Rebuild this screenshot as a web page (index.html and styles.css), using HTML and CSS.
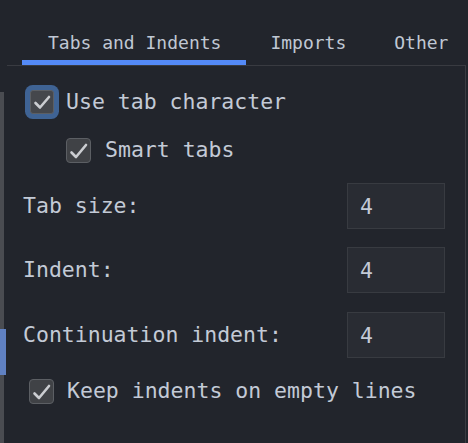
FILE: index.html
```html
<!DOCTYPE html>
<html>
<head>
<meta charset="utf-8">
<link rel="stylesheet" href="styles.css">
</head>
<body>
<div class="app">
  <div class="sidebar">
    <div class="bar"><div class="bar-active"></div></div>
  </div>
  <div class="main">
    <div class="header">
      <div class="tabs">
        <div class="tab tab-active">Tabs and Indents</div>
        <div class="tab">Imports</div>
        <div class="tab">Other</div>
      </div>
    </div>
    <div class="content">
      <label class="check-row row-first">
        <span class="box box-focus"><svg viewBox="0 0 24 24" width="24" height="24"><path d="M5.5 13 L10 17.5 L19 7" /></svg></span>
        <span class="check-label gap-12">Use tab character</span>
      </label>
      <label class="check-row row-smart">
        <span class="box"><svg viewBox="0 0 25 25" width="25" height="25"><path d="M5.5 14.5 L10 19 L20 7" /></svg></span>
        <span class="check-label gap-14">Smart tabs</span>
      </label>
      <div class="field row-field1">
        <span class="field-label">Tab size:</span>
        <span class="input">4</span>
      </div>
      <div class="field row-field">
        <span class="field-label">Indent:</span>
        <span class="input">4</span>
      </div>
      <div class="field row-field3">
        <span class="field-label">Continuation indent:</span>
        <span class="input">4</span>
      </div>
      <label class="check-row row-keep">
        <span class="box"><svg viewBox="0 0 25 25" width="25" height="25"><path d="M5.5 14.5 L10 19 L20 7" /></svg></span>
        <span class="check-label gap-13">Keep indents on empty lines</span>
      </label>
    </div>
  </div>
</div>
</body>
</html>
```

FILE: styles.css
```css
* { box-sizing: border-box; }
html, body {
  margin: 0;
  padding: 0;
  background: #22252c;
  width: 468px;
  height: 443px;
  overflow: hidden;
}
.app {
  display: flex;
  width: 468px;
  height: 443px;
  font-family: "DejaVu Sans Mono", "Liberation Mono", monospace;
  color: #c3cad6;
}
.sidebar {
  width: 7px;
  padding-top: 92px;
  display: flex;
  flex-direction: column;
}
.bar {
  width: 4px;
  flex: 1;
  background: #4a4c51;
}
.bar-active {
  width: 6px;
  height: 46px;
  margin-top: 237px;
  background: #6081c2;
}
.main {
  width: 459px;
  display: flex;
  flex-direction: column;
}
.header {
  height: 66px;
  border-bottom: 1px solid #393b41;
}
.tabs {
  display: flex;
  margin-left: 15px;
}
.tab {
  font-size: 18px;
  line-height: 22px;
  padding: 32px 24px 11px;
  color: #c0c8d4;
  white-space: nowrap;
}
.tab-active {
  padding: 32px 25px 6px 26px;
  border-bottom: 5px solid #548af7;
}
.content {
  flex: 1;
  border-right: 1px solid #393b41;
  display: flex;
  flex-direction: column;
  padding-left: 16px;
  font-size: 21.5px;
}
.check-row {
  display: flex;
  align-items: center;
}
.box {
  display: flex;
  align-items: center;
  justify-content: center;
  width: 25px;
  height: 25px;
  border: 1px solid #5c5f64;
  border-radius: 4px;
  background: #404246;
  flex-shrink: 0;
}
.box svg {
  display: block;
  flex-shrink: 0;
}
.box path {
  fill: none;
  stroke: #cbcdd1;
  stroke-width: 2.6;
  stroke-linecap: round;
  stroke-linejoin: round;
}
.box-focus {
  width: 24px;
  height: 24px;
  border-radius: 3px;
  background: #45474c;
  box-shadow: 0 0 0 5px #3f6394;
}
.check-label {
  white-space: nowrap;
  line-height: 26px;
}
.gap-12 { margin-left: 12px; }
.gap-13 { margin-left: 13px; }
.gap-14 { margin-left: 14px; }
.row-first {
  margin-top: 24px;
  margin-left: 7px;
  height: 24px;
}
.row-smart {
  margin-top: 23px;
  margin-left: 43px;
  height: 26px;
}
.row-keep {
  margin-top: 20px;
  margin-left: 6px;
  height: 26px;
}
.field {
  display: flex;
  align-items: center;
  justify-content: space-between;
  width: 422px;
  height: 46px;
}
.row-field1 { margin-top: 20px; }
.row-field { margin-top: 18px; }
.row-field3 { margin-top: 19px; }
.field-label {
  white-space: nowrap;
  line-height: 26px;
}
.input {
  width: 98px;
  height: 46px;
  background: #292c33;
  border: 1px solid #383b41;
  padding-left: 12px;
  display: flex;
  align-items: center;
  font-size: 21.5px;
  color: #c3cad6;
}
```
